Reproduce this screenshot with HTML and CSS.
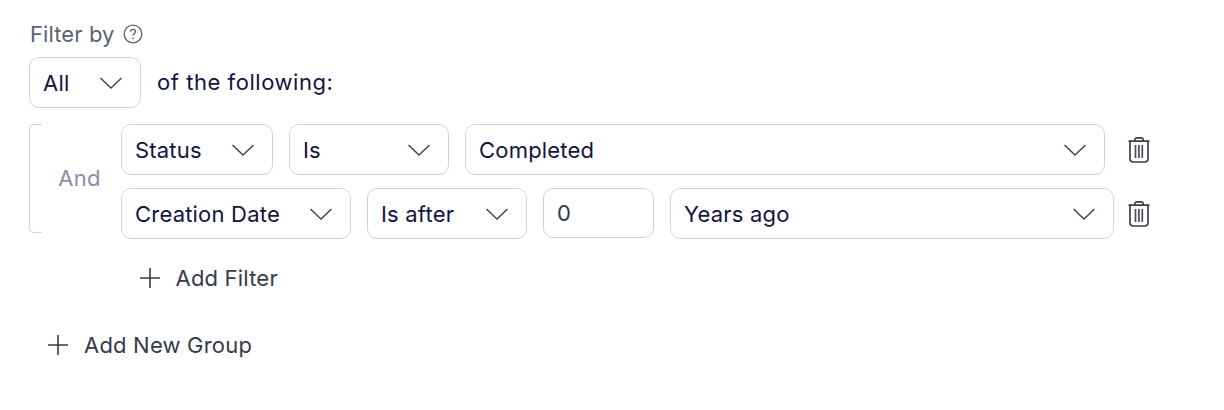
FILE: index.html
```html
<!DOCTYPE html>
<html lang="en">
<head>
<meta charset="utf-8">
<title>Filter by</title>
<link rel="stylesheet" href="styles.css">
</head>
<body>
<svg class="defs" width="0" height="0" aria-hidden="true">
  <defs>
    <symbol id="chev" viewBox="0 0 22 12"><path d="M.5 1L11 11 21.500 1" fill="none" stroke="#3f3f5e" stroke-width="1.400"/></symbol>
    <symbol id="plus" viewBox="0 0 22 22"><path d="M11 1v20M1 11h20" fill="none" stroke="#363a4a" stroke-width="1.600"/></symbol>
    <symbol id="trash" viewBox="0 0 22 26"><path d="M.5 4.200h21M6.800 4.200V3C6.800 1.800 7.800.9 9 .9h4c1.200 0 2.200.9 2.200 2.100v1.200M2 4.200v17.300C2 23.800 3.400 25 5.500 25h11c2.100 0 3.500-1.200 3.500-3.500V4.200" fill="none" stroke="#3a3d4c" stroke-width="1.700"/><path d="M7.500 8v13M10.900 8v13M14.300 8v13" fill="none" stroke="#4a4d5c" stroke-width="1.700"/></symbol>
  </defs>
</svg>
<main class="page">
  <div class="title">
    <span>Filter by</span>
    <svg class="help" viewBox="0 0 20 20"><circle cx="10" cy="10" r="8.800" fill="none" stroke="#5b6274" stroke-width="1.300"/><path d="M7.500 7.800c0-1.500 1.100-2.400 2.500-2.400s2.500.9 2.500 2.200c0 1.900-2.500 1.900-2.500 3.900" fill="none" stroke="#5b6274" stroke-width="1.300"/><circle cx="10" cy="14.300" r=".9" fill="#5b6274"/></svg>
  </div>
  <div class="match">
    <div class="field w-all"><span>All</span><svg class="chev"><use href="#chev"/></svg></div>
    <span class="match-label">of the following:</span>
  </div>
  <div class="group">
    <div class="bracket"></div>
    <div class="and">And</div>
    <div class="rows">
      <div class="row">
        <div class="fields">
          <div class="field w-status"><span>Status</span><svg class="chev"><use href="#chev"/></svg></div>
          <div class="field w-is"><span>Is</span><svg class="chev"><use href="#chev"/></svg></div>
          <div class="field w-completed"><span>Completed</span><svg class="chev"><use href="#chev"/></svg></div>
        </div>
        <svg class="trash"><use href="#trash"/></svg>
      </div>
      <div class="row">
        <div class="fields">
          <div class="field w-date"><span>Creation Date</span><svg class="chev"><use href="#chev"/></svg></div>
          <div class="field w-is"><span>Is after</span><svg class="chev"><use href="#chev"/></svg></div>
          <div class="field w-num"><span class="num">0</span></div>
          <div class="field w-years"><span>Years ago</span><svg class="chev"><use href="#chev"/></svg></div>
        </div>
        <svg class="trash"><use href="#trash"/></svg>
      </div>
      <div class="add add-filter"><svg class="plus"><use href="#plus"/></svg><span>Add Filter</span></div>
    </div>
  </div>
  <div class="add add-group"><svg class="plus"><use href="#plus"/></svg><span>Add New Group</span></div>
</main>
</body>
</html>
```
FILE: styles.css
```css
* { box-sizing: border-box; }
html, body { margin: 0; background: #fff; }
body { font-family: Inter, "Liberation Sans", sans-serif; font-size: 22px; line-height: 30px; color: #14123f; overflow: hidden; }
.defs { position: absolute; }
.page { width: 1224px; height: 410px; padding: 19px 0 0 29px; }
.title { display: flex; align-items: center; gap: 8px; color: #5b6274; height: 30px; letter-spacing: .1px; padding-left: 1px; }
.help { width: 20px; height: 20px; }
.match { display: flex; align-items: center; gap: 16px; margin-top: 8px; }
.match-label { letter-spacing: .55px; position: relative; top: -1px; }
.field { height: 51px; display: flex; align-items: center; justify-content: space-between; padding: 0 18px 0 13px; border: 1px solid #d0d0e2; border-radius: 10px; background: #fff; flex: none; letter-spacing: .2px; }
.chev { width: 22px; height: 12px; flex: none; }
.w-all { width: 112px; }
.w-status { width: 152px; }
.w-is { width: 160px; }
.w-completed { width: 640px; }
.w-date { width: 230px; }
.w-num { width: 111px; height: 50px; align-self: flex-start; }
.num { color: #32364a; }
.w-years { width: 444px; }
.group { display: flex; margin-top: 16px; position: relative; }
.bracket { width: 13px; height: 109px; border: 1px solid #d0d0e2; border-right: 0; border-radius: 5px 0 0 5px; flex: none; }
.and { width: 92px; height: 107px; display: flex; align-items: center; justify-content: center; color: #8b8ca3; flex: none; margin-left: -13px; padding-left: 9px; letter-spacing: .3px; }
.rows { display: flex; flex-direction: column; gap: 13px; }
.row { display: flex; align-items: center; justify-content: space-between; width: 1029px; }
.fields { display: flex; gap: 16px; }
.trash { width: 22px; height: 26px; flex: none; }
.add { display: flex; align-items: center; gap: 15px; color: #363a4a; letter-spacing: .2px; }
.plus { width: 22px; height: 22px; flex: none; }
.add-filter { margin: 11px 0 0 18px; height: 30px; gap: 14.5px; }
.add-group { margin: 37px 0 0 18px; height: 30px; }
```
